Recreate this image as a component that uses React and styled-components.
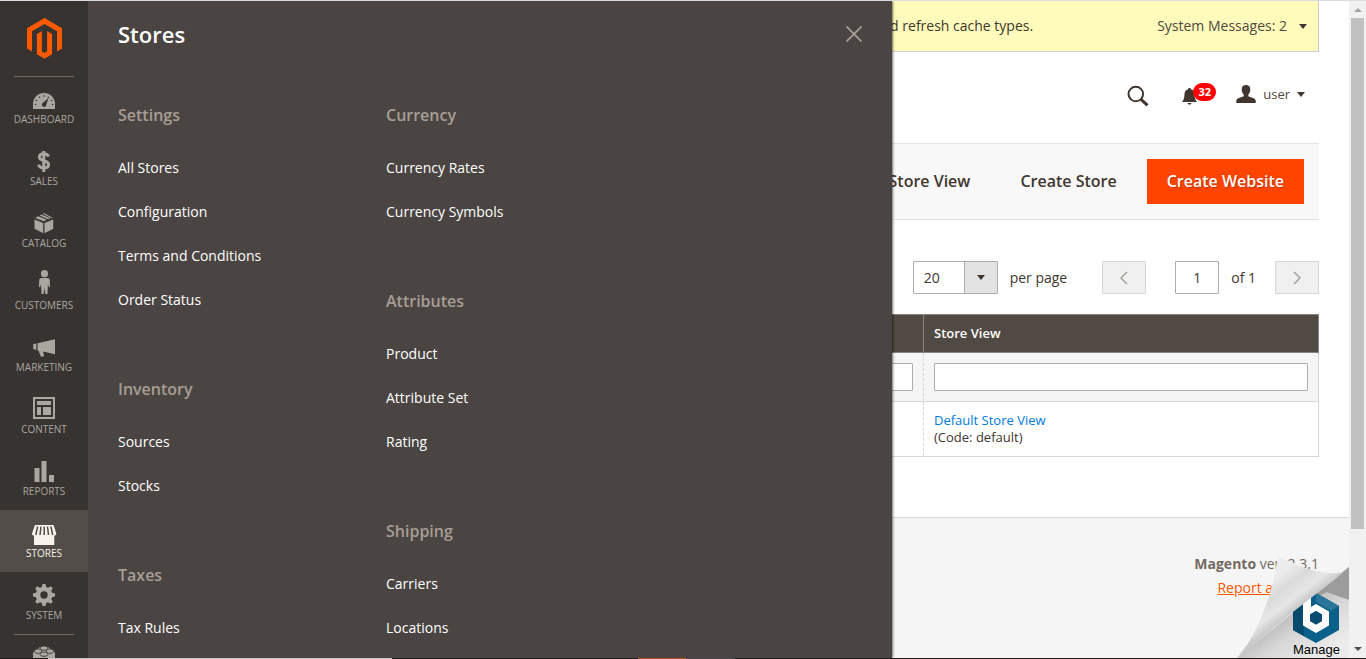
import React, { useState } from 'react';
import styled, { createGlobalStyle, css } from 'styled-components';

const icons = {
  dashboard: (
    <>
      <path d="M7 23v-5a11 11 0 0 1 22 0v5z" />
      <g fill="#373330">
        <circle cx="9.5" cy="18.5" r="0.8" />
        <circle cx="10.5" cy="14.5" r="0.8" />
        <circle cx="13.5" cy="11.2" r="0.8" />
        <circle cx="18" cy="10" r="0.8" />
        <circle cx="22.3" cy="11.2" r="0.8" />
        <circle cx="25.6" cy="14.5" r="0.8" />
        <circle cx="26.6" cy="18.5" r="0.8" />
        <path d="M22.5 12l-2.2 6.4a2.2 2.2 0 1 1-3.2-1.6z" />
      </g>
    </>
  ),
  sales: (
    <path
      d="M22.5 8.6c-.6-2-2.2-2.8-4.7-2.8-2.8 0-4.4 1.3-4.4 3.3 0 5 9.200 2.600 9.200 7.300 0 2.300-2 3.500-4.800 3.500-2.900 0-4.700-1.200-5.200-3.300M17.800 3v21"
      fill="none"
      stroke="currentColor"
      strokeWidth="3"
    />
  ),
  catalog: (
    <>
      <path d="M8.500 9.500l8.700 3.600v10.100l-8.700-4.400zM27.200 9.500l-8.700 3.600v10.100l8.700-4.400z" />
      <path d="M9.300 8l2.900-1.700 8.500 3.500-2.800 1.500zM13.600 5.600l2-1.100 8.500 3.700-2 1.100zM17 3.700l1-.6 8.500 4.700-1.200.4z" />
    </>
  ),
  customers: (
    <>
      <circle cx="18.5" cy="1.7" r="3.6" />
      <path d="M15.500 6h6c1.500 0 2.200 1 2.300 2.500l.2 6c0 1-1.300 1-1.500 0l-.5-3-.5 10.500h-2.200l-.8-6.500-.8 6.500h-2.200L15 11.500l-.5 3c-.2 1-1.500 1-1.500 0l.2-6C13.300 7 14 6 15.500 6z" />
    </>
  ),
  marketing: (
    <path d="M7.300 10l3-.5v6.300l-3-.5zM11.500 9.300L29 5.300v15l-12-2.700 1.200 4.400-3.200.9-2.400-6.200-1.100-.3z" />
  ),
  content: (
    <>
      <path d="M7 1h22v22H7zM9 3v18h18V3z" fillRule="evenodd" />
      <path d="M11 5h14v4H11zM11 11h4v8h-4zM17 11h8v8h-8z" />
    </>
  ),
  reports: <path d="M8.500 10h5v14h-5zM15.500 3h5v21h-5zM23 17h5v7h-5z" />,
  stores: (
    <>
      <path d="M9 5h18.500l2.800 8.500c0 1.500-.8 2-2 2V25H8v-9.500c-1.200 0-2-.5-2-2z" />
      <path
        d="M11.600 6.500L9.800 15M15 6.500L14 15M21.500 6.500l1 8.500M24.900 6.500l1.800 8.500M18.200 6.500V15"
        stroke="#524d49"
        strokeWidth="1.5"
      />
    </>
  ),
  system: (
    <path
      d="M16.500 2h3l.7 3 1.900.8 2.600-1.600 2.100 2.100-1.600 2.600.8 1.900 3 .7v3l-3 .7-.8 1.900 1.600 2.600-2.100 2.100-2.600-1.600-1.900.8-.7 3h-3l-.7-3-1.900-.8-2.600 1.600-2.100-2.100 1.600-2.600-.8-1.900-3-.7v-3l3-.7.8-1.900-1.600-2.600 2.100-2.100 2.600 1.600 1.900-.8zM18 9.300a3.700 3.700 0 1 0 0 7.400 3.700 3.700 0 0 0 0-7.400z"
      fillRule="evenodd"
    />
  ),
  partners: (
    <>
      <path d="M7 8.500L14 3h8l7 5.500V17l-11 6-11-6z" />
      <g fill="currentColor" stroke="#373330" strokeWidth="0.8">
        <ellipse cx="18" cy="4.200" rx="4" ry="2.200" />
        <ellipse cx="12" cy="7.200" rx="3.800" ry="2.200" />
        <ellipse cx="24" cy="7.200" rx="3.800" ry="2.200" />
        <ellipse cx="18" cy="10.200" rx="4" ry="2.200" />
      </g>
    </>
  ),
};

const menu = [
  { id: 'dashboard', label: 'Dashboard' },
  { id: 'sales', label: 'Sales' },
  { id: 'catalog', label: 'Catalog' },
  { id: 'customers', label: 'Customers' },
  { id: 'marketing', label: 'Marketing' },
  { id: 'content', label: 'Content' },
  { id: 'reports', label: 'Reports' },
  { id: 'stores', label: 'Stores' },
  { id: 'system', label: 'System' },
  { id: 'partners', label: '' },
];

const submenu = [
  [
    { title: 'Settings', items: ['All Stores', 'Configuration', 'Terms and Conditions', 'Order Status'] },
    { title: 'Inventory', items: ['Sources', 'Stocks'] },
    { title: 'Taxes', items: ['Tax Rules'] },
  ],
  [
    { title: 'Currency', items: ['Currency Rates', 'Currency Symbols'] },
    { title: 'Attributes', items: ['Product', 'Attribute Set', 'Rating'] },
    { title: 'Shipping', items: ['Carriers', 'Locations'] },
  ],
];

function Sidebar() {
  return (
    <Side>
      <LogoLink href="#home" aria-label="Magento Admin">
        <svg width="36" height="42" viewBox="0 0 36 42" fill="#ff5a00">
          <path d="M18.500 0L36 10.200v20.300l-5 2.900V13.200L18.500 5.900 6 13.200v20.200l-5-2.900V10.200z" />
          <path d="M10.900 16l5-2.900v20.200l2.600 1.600 2.600-1.600V13.100l5 2.900v20.300l-7.600 4.400-7.600-4.400z" />
        </svg>
      </LogoLink>
      {menu.map(({ id, label }) => (
        <SideLink
          key={ id }
          href={ `#${id}` }
          $active={ id === 'stores' }
          $line={ id === 'dashboard' || id === 'partners' }
          aria-label={ label || id }
        >
          <SideIcon viewBox="0 0 36 26" aria-hidden="true">{icons[id]}</SideIcon>
          <SideLabel>{label}</SideLabel>
        </SideLink>
      ))}
    </Side>
  );
}

function StoresMenu({ onClose }) {
  return (
    <Flyout>
      <FlyoutHead>
        <h2>Stores</h2>
        <CloseButton type="button" aria-label="Close" onClick={ onClose }>
          <svg width="16" height="16" viewBox="0 0 16 16" stroke="currentColor" strokeWidth="1.8">
            <path d="M0.500 0.500l15 15M15.500 0.500l-15 15" />
          </svg>
        </CloseButton>
      </FlyoutHead>
      <Columns>
        {submenu.map((groups) => (
          <Column key={ groups[0].title }>
            {groups.map(({ title, items }) => (
              <section key={ title }>
                <h3>{title}</h3>
                {items.map((item) => (
                  <FlyoutLink key={ item } href="#stores">{item}</FlyoutLink>
                ))}
              </section>
            ))}
          </Column>
        ))}
      </Columns>
    </Flyout>
  );
}

function StoreGrid() {
  return (
    <Table>
      <thead>
        <tr>
          <th aria-label="Web Site" />
          <th aria-label="Store" />
          <th className="view">Store View</th>
        </tr>
      </thead>
      <tbody>
        <tr className="filters">
          <td><input type="text" aria-label="Filter by web site" /></td>
          <td><input type="text" aria-label="Filter by store" /></td>
          <td><input type="text" aria-label="Filter by store view" /></td>
        </tr>
        <tr>
          <td />
          <td />
          <td>
            <a href="#view">Default Store View</a>
            <br />
            (Code: default)
          </td>
        </tr>
      </tbody>
    </Table>
  );
}

function PageCurl() {
  return (
    <Curl href="#manage">
      <svg width="112" height="103" viewBox="0 0 112 103" aria-hidden="true">
        <defs>
          <linearGradient id="under" gradientUnits="userSpaceOnUse" x1="50" y1="60" x2="80" y2="103">
            <stop offset="0" stopColor="#bdbdbd" />
            <stop offset="0.4" stopColor="#d8d8d8" />
            <stop offset="1" stopColor="#ebebeb" />
          </linearGradient>
          <linearGradient id="fold" gradientUnits="userSpaceOnUse" x1="34" y1="26" x2="62" y2="62">
            <stop offset="0" stopColor="#ececec" />
            <stop offset="0.3" stopColor="#dadada" />
            <stop offset="0.6" stopColor="#e6e6e6" />
            <stop offset="1" stopColor="#b4b4b4" />
          </linearGradient>
        </defs>
        <path d="M112 12L0 103h112z" fill="url(#under)" />
        <path d="M112 12v33L90 37 70 46z" fill="#9c9c9c" />
        <path d="M79 38l23 13v24L79 88 56 75V51z" fill="#0a6088" />
        <path d="M56 51l11-6v36l12 7-23-13z" fill="#064a6d" />
        <path d="M79 38l23 13-8 5-15-9z" fill="#2a7599" />
        <path
          d="M66 38l8 2v12l5-3 13 7.500v14L79 78l-13-7.500zM79 56l-6 3.500v6.500l6 3.500 6-3.500v-6.500z"
          fill="#fff"
          fillRule="evenodd"
        />
        <path d="M79 56l6 3.500v6.500l-6 3.500-6-3.500v-6.500z" fill="#084c70" />
        <path
          d="M41 1c18 9 44 21 65 16l6-5C96 27 80 38 56 57S14 92 0 103C21 78 34 45 41 1z"
          fill="url(#fold)"
        />
      </svg>
      <span>Manage</span>
    </Curl>
  );
}

function App() {
  const [open, setOpen] = useState(true);

  return (
    <Screen>
      <GlobalStyle />
      <Body>
        <Sidebar />
        <Main>
          <Padded>
            <Notice>
              <p>Please go to Cache Management and refresh cache types.</p>
              <PlainButton type="button">
                System Messages: 2
                <Caret />
              </PlainButton>
            </Notice>
            <Header>
              <PlainButton type="button" aria-label="Search">
                <svg width="22" height="22" viewBox="0 0 22 22" fill="none" stroke="#41362f">
                  <circle cx="8.8" cy="9" r="7.3" strokeWidth="2" />
                  <path d="M14 14.300l6.500 6" strokeWidth="3" />
                </svg>
              </PlainButton>
              <Bell type="button" aria-label="Notifications">
                <svg width="15" height="17" viewBox="0 0 15 17" fill="#41362f">
                  <path d="M7.500 0c1 0 1.400.6 1.400 1.300 2.600.7 3.700 2.900 3.700 5.700 0 3.500.8 5 2.400 7H0c1.600-2 2.400-3.500 2.400-7 0-2.800 1.100-5 3.700-5.700C6.100.6 6.500 0 7.500 0zM5.500 15h4c-.3 2-3.700 2-4 0z" />
                </svg>
                <Badge>32</Badge>
              </Bell>
              <Account type="button">
                <svg width="20" height="18" viewBox="0 0 20 18" fill="#41362f">
                  <path d="M10 0c3 0 4.400 2 4.300 4.700-.1 2.200-.9 3.700-2 4.900v1.600c3.200 1.400 7 1.700 7.400 4.300V18H.3v-2.500c.4-2.600 4.200-2.900 7.400-4.300V9.600c-1.100-1.200-1.900-2.700-2-4.900C5.600 2 7 0 10 0z" />
                </svg>
                user
                <Caret />
              </Account>
            </Header>
            <Actions>
              <ActionButton type="button">Create Store View</ActionButton>
              <ActionButton type="button">Create Store</ActionButton>
              <ActionButton type="button" $primary>Create Website</ActionButton>
            </Actions>
            <Pager>
              <PerPage>
                <SelectBox>
                  <select defaultValue="20">
                    <option>20</option>
                    <option>30</option>
                    <option>50</option>
                  </select>
                  <Caret />
                </SelectBox>
                per page
              </PerPage>
              <PageButton type="button" aria-label="Previous page" disabled>
                <svg width="8" height="14" viewBox="0 0 8 14"><path d="M7 1L1 7l6 6" /></svg>
              </PageButton>
              <PageLabel>
                <input type="text" defaultValue="1" />
                of 1
              </PageLabel>
              <PageButton type="button" aria-label="Next page" disabled>
                <svg width="8" height="14" viewBox="0 0 8 14"><path d="M1 1l6 6-6 6" /></svg>
              </PageButton>
            </Pager>
            <StoreGrid />
          </Padded>
          <Footer>
            <p><strong>Magento</strong> ver. 2.3.1</p>
            <a href="#report">Report an Issue</a>
          </Footer>
          {open && <StoresMenu onClose={ () => setOpen(false) } />}
          <PageCurl />
        </Main>
        <Scrollbar aria-hidden="true">
          <Arrow $up />
          <Thumb />
          <Arrow />
        </Scrollbar>
      </Body>
      <Taskbar />
    </Screen>
  );
}

export default App;

const GlobalStyle = createGlobalStyle`
  * {
    box-sizing: border-box;
  }

  body {
    color: #41362f;
    font-family: 'Open Sans', sans-serif;
    font-size: 14px;
    line-height: 20px;
    margin: 0;
    overflow: hidden;
  }

  h2, h3, p {
    margin: 0;
  }

  button, input, select {
    color: inherit;
    font: inherit;
  }
`;

const Screen = styled.div`
  border-top: 1px solid #d8dce0;
  display: flex;
  flex-direction: column;
  height: 100vh;
`;

const Body = styled.div`
  display: flex;
  flex: 1;
  min-height: 0;
`;

const Side = styled.nav`
  background-color: #373330;
  flex: none;
  overflow: hidden;
  width: 88px;
`;

const LogoLink = styled.a`
  display: flex;
  height: 75px;
  justify-content: center;
  padding-top: 17px;
`;

const SideLink = styled.a`
  align-items: center;
  background-color: ${({ $active }) => ($active ? '#524d49' : 'transparent')};
  color: ${({ $active }) => ($active ? '#f7f3eb' : '#aaa6a0')};
  display: flex;
  flex-direction: column;
  height: 62px;
  padding-top: 10px;
  text-decoration: none;

  ${({ $line }) => $line && css`
    background: linear-gradient(#736963, #736963) center top / 60px 1px no-repeat;
  `}
`;

const SideIcon = styled.svg`
  fill: currentColor;
  height: 26px;
  overflow: visible;
  width: 36px;
`;

const SideLabel = styled.span`
  font-size: 10px;
  line-height: 14px;
  text-transform: uppercase;
`;

const Main = styled.main`
  display: flex;
  flex: 1;
  flex-direction: column;
  min-width: 0;
  overflow: hidden;
  position: relative;
`;

const Padded = styled.div`
  padding: 0 30px;
`;

const Notice = styled.div`
  align-items: center;
  background-color: #fffbbb;
  border: 1px solid #ccc;
  border-top: 0;
  display: flex;
  gap: 124px;
  height: 51px;
  justify-content: flex-end;
  padding-right: 11px;
  white-space: nowrap;
`;

const PlainButton = styled.button`
  align-items: center;
  background: none;
  border: 0;
  color: #514943;
  display: flex;
  gap: 12px;
  padding: 0;
`;

const Caret = styled.i`
  border: 4px solid transparent;
  border-bottom: 0;
  border-top: 5px solid #41362f;
`;

const Header = styled.header`
  align-items: center;
  display: flex;
  height: 91px;
  justify-content: flex-end;
  padding: 0 14px 4px 0;
`;

const Bell = styled(PlainButton)`
  margin: 2px 39px 0 33px;
  position: relative;
`;

const Badge = styled.span`
  background-color: #f00;
  border-radius: 9px;
  color: #fff;
  font-size: 11px;
  font-weight: 700;
  left: 11px;
  line-height: 18px;
  position: absolute;
  text-align: center;
  top: -5px;
  width: 23px;
`;

const Account = styled(PlainButton)`
  font-size: 13px;
  gap: 7px;
  padding-bottom: 3px;
`;

const Actions = styled.div`
  align-items: center;
  background-color: #f8f8f8;
  border: solid #e3e3e3;
  border-width: 1px 0;
  display: flex;
  gap: 10px;
  height: 77px;
  justify-content: flex-end;
  padding-right: 15px;
`;

const ActionButton = styled.button`
  background-color: ${({ $primary }) => ($primary ? '#ff4400' : 'transparent')};
  border: 0;
  color: ${({ $primary }) => ($primary ? '#fff' : '#41362f')};
  font-size: 16px;
  font-weight: 600;
  height: 45px;
  padding: 0 20px 2px;
  text-shadow: ${({ $primary }) => ($primary ? '1px 1px 0 rgba(0, 0, 0, 0.25)' : 'none')};
`;

const Pager = styled.div`
  display: flex;
  height: 33px;
  justify-content: flex-end;
  margin: 41px 0 20px;

  input, select {
    background-color: #fff;
    border: 1px solid #adadad;
    border-radius: 1px;
    height: 33px;
  }
`;

const PerPage = styled.label`
  align-items: center;
  display: flex;
  gap: 12px;
  margin-right: 35px;
`;

const SelectBox = styled.span`
  position: relative;

  select {
    appearance: none;
    background-image: linear-gradient(to right, #adadad 1px, #e3e3e3 1px);
    background-position: right;
    background-repeat: no-repeat;
    background-size: 33px 100%;
    display: block;
    padding: 0 10px;
    width: 85px;
  }

  i {
    pointer-events: none;
    position: absolute;
    right: 13px;
    top: 14px;
  }
`;

const PageButton = styled.button`
  align-items: center;
  background-color: #f0f0f0;
  border: 1px solid #d6d6d6;
  border-radius: 1px;
  display: flex;
  justify-content: center;
  width: 44px;

  path {
    fill: none;
    stroke: #a5a09c;
    stroke-width: 1.5;
  }
`;

const PageLabel = styled.label`
  align-items: center;
  display: flex;
  gap: 12px;
  margin: 0 19px 0 29px;

  input {
    padding: 0;
    text-align: center;
    width: 44px;
  }
`;

const Table = styled.table`
  border-collapse: collapse;
  font-size: 13px;
  line-height: 17px;
  table-layout: fixed;
  width: 100%;

  th {
    background-color: #514943;
    border: 1px solid #8a837f;
    color: #fff;
    font-weight: 600;
    height: 38px;
    padding: 0 10px;
    text-align: left;
  }

  .view {
    width: 395px;
  }

  td {
    border: 1px solid #d6d6d6;
    border-left-style: dashed;
    border-right-style: dashed;
    height: 55px;
    padding: 0 10px;
  }

  td:last-child {
    border-right-style: solid;
  }

  .filters td {
    background-color: #f5f5f5;
    height: 49px;
  }

  input {
    background-color: #fff;
    border: 1px solid #adadad;
    border-radius: 1px;
    display: block;
    height: 28px;
    width: 100%;
  }

  a {
    color: #007bdb;
    text-decoration: none;
  }
`;

const Footer = styled.footer`
  background-color: #f5f5f5;
  border-top: 1px solid #d9d9d9;
  color: #736963;
  flex: 1;
  line-height: 24px;
  margin-top: 60px;
  padding: 34px 30px;
  text-align: right;

  a {
    color: #ff5501;
  }
`;

const Flyout = styled.div`
  background-color: #4a4542;
  bottom: 0;
  box-shadow: 0 0 3px #000;
  clip-path: inset(0 -6px 0 0);
  color: #fff;
  left: 0;
  overflow: hidden;
  padding: 18px 30px 0;
  position: absolute;
  top: 0;
  width: 804px;
`;

const FlyoutHead = styled.div`
  align-items: center;
  display: flex;
  justify-content: space-between;
  line-height: 30px;
  margin-bottom: 55px;

  h2 {
    font-size: 22px;
    font-weight: 600;
  }
`;

const CloseButton = styled.button`
  background: none;
  border: 0;
  color: #a79d95;
  display: flex;
  padding: 0;
`;

const Columns = styled.div`
  display: flex;
`;

const Column = styled.div`
  width: 268px;

  section {
    margin-bottom: 56px;
  }

  h3 {
    color: #a79d95;
    font-size: 16px;
    font-weight: 600;
    line-height: 22px;
    margin-bottom: 20px;
  }
`;

const FlyoutLink = styled.a`
  color: #fff;
  display: block;
  line-height: 44px;
  text-decoration: none;
`;

const Curl = styled.a`
  bottom: 0;
  color: #000;
  font-family: 'Liberation Sans', sans-serif;
  font-size: 13px;
  position: absolute;
  right: 0;

  svg {
    display: block;
  }

  span {
    bottom: 0;
    line-height: 16px;
    position: absolute;
    right: 9px;
  }
`;

const Scrollbar = styled.div`
  align-items: center;
  background-color: #f1f1f1;
  display: flex;
  flex: none;
  flex-direction: column;
  padding: 7px 0;
  width: 17px;
`;

const Arrow = styled.i`
  border: 4px solid transparent;
  border-bottom: ${({ $up }) => ($up ? '4px solid #a3a3a3' : '0')};
  border-top: ${({ $up }) => ($up ? '0' : '4px solid #505050')};
`;

const Thumb = styled.div`
  background-color: #c1c1c1;
  height: calc(80% - 3px);
  margin: 6px 0 auto;
  width: 13px;
`;

const Taskbar = styled.div`
  background: linear-gradient(
    to right,
    #1d1a1a 48px,
    #c8c4c2 48px 392px,
    #1d1a1a 392px 638px,
    #b5541c 638px 686px,
    #4a4546 686px 735px,
    #1d1a1a 735px
  );
  height: 1px;
`;
